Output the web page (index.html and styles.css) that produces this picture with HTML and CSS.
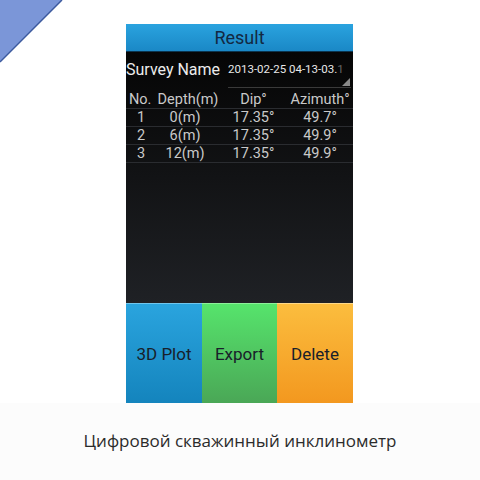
FILE: index.html
```html
<!DOCTYPE html>
<html>
<head>
<meta charset="utf-8">
<link rel="stylesheet" href="styles.css">
</head>
<body>
<svg class="corner" width="64" height="64" viewBox="0 0 64 64">
  <polygon points="0,0 62,0 0,62" fill="#7b96d8"/>
  <line x1="62" y1="0" x2="0" y2="62" stroke="#3d5a9e" stroke-width="1.5"/>
</svg>
<div class="page">
  <div class="phone">
    <div class="titlebar">Result</div>
    <div class="screen">
      <div class="survey">
        <span class="survey-label">Survey Name</span>
        <span class="spinner">2013-02-25 04-13-03.<span class="fade">1</span></span>
      </div>
      <div class="table">
        <div class="row head">
          <span class="c1">No.</span><span class="c2">Depth(m)</span><span class="c3">Dip°</span><span class="c4">Azimuth°</span>
        </div>
        <div class="row">
          <span class="c1">1</span><span class="c2">0(m)</span><span class="c3">17.35°</span><span class="c4">49.7°</span>
        </div>
        <div class="row">
          <span class="c1">2</span><span class="c2">6(m)</span><span class="c3">17.35°</span><span class="c4">49.9°</span>
        </div>
        <div class="row">
          <span class="c1">3</span><span class="c2">12(m)</span><span class="c3">17.35°</span><span class="c4">49.9°</span>
        </div>
      </div>
    </div>
    <div class="buttons">
      <div class="btn blue">3D Plot</div>
      <div class="btn green">Export</div>
      <div class="btn orange">Delete</div>
    </div>
  </div>
  <div class="footer">
    <div class="caption">Цифровой скважинный инклинометр</div>
  </div>
</div>
</body>
</html>
```
FILE: styles.css
```css
html, body {
  margin: 0;
  padding: 0;
  background: #ffffff;
}
.corner {
  position: absolute;
  left: 0;
  top: 0;
}
.page {
  padding-top: 24px;
  display: flex;
  flex-direction: column;
  align-items: center;
}
.phone {
  width: 227px;
  margin-left: -1px;
  display: flex;
  flex-direction: column;
  font-family: Roboto, "Liberation Sans", sans-serif;
}
.titlebar {
  height: 28px;
  background: linear-gradient(#2aa3df, #1a88c6);
  color: #132842;
  font-size: 18px;
  display: flex;
  align-items: center;
  justify-content: center;
  border-bottom: 1px solid #0b3550;
  box-sizing: border-box;
}
.screen {
  height: 251px;
  background: linear-gradient(#050505, #1f2125);
  display: flex;
  flex-direction: column;
}
.survey {
  height: 39px;
  display: flex;
  align-items: center;
  color: #ececec;
  white-space: nowrap;
}
.survey-label {
  flex-shrink: 0;
  font-size: 16px;
  margin-top: -5px;
}
.spinner {
  flex-shrink: 0;
  position: relative;
  margin-left: 8px;
  font-size: 11.5px;
  color: #e8e8e8;
  width: 123px;
  height: 33px;
  line-height: 28px;
  border-bottom: 1px solid #3a3a3a;
  box-sizing: border-box;
  overflow: hidden;
}
.spinner::after {
  content: "";
  position: absolute;
  right: 1px;
  bottom: 1px;
  width: 0;
  height: 0;
  border-left: 8px solid transparent;
  border-bottom: 8px solid #8a8a8a;
}
.fade {
  color: #666;
}
.table {
  display: flex;
  flex-direction: column;
}
.row {
  height: 18px;
  display: grid;
  grid-template-columns: 30px 64px 67px 66px;
  align-items: center;
  color: #c9c9c9;
  font-size: 14.5px;
  border-bottom: 1px solid #2a2c30;
  box-sizing: border-box;
  white-space: nowrap;
}
.row span {
  text-align: center;
}
.row .c2 {
  padding-right: 6px;
}
.row.head .c2 {
  padding-right: 0;
}
.row.head .c1 {
  text-align: left;
  padding-left: 3px;
}
.row .c1 {
  padding-left: 0;
}
.buttons {
  height: 100px;
  display: grid;
  grid-template-columns: 76px 75px 76px;
}
.btn {
  display: flex;
  align-items: center;
  justify-content: center;
  font-size: 17px;
  color: #18202a;
}
.blue {
  background: linear-gradient(#2aa4de, #1484bd);
  border-top: 1px solid #6fc6ee;
}
.green {
  background: linear-gradient(#56e46c, #4aa756);
  border-top: 1px solid #8df09a;
}
.orange {
  background: linear-gradient(#fbbd3e, #f3981f);
  border-top: 1px solid #fdd889;
}
.footer {
  align-self: stretch;
  background: #fcfcfc;
  height: 77px;
  box-sizing: border-box;
  display: flex;
  justify-content: center;
  padding-top: 26px;
}
.caption {
  font-family: "Open Sans", "Noto Sans", sans-serif;
  font-size: 17px;
  color: #2b2b2b;
}
```
